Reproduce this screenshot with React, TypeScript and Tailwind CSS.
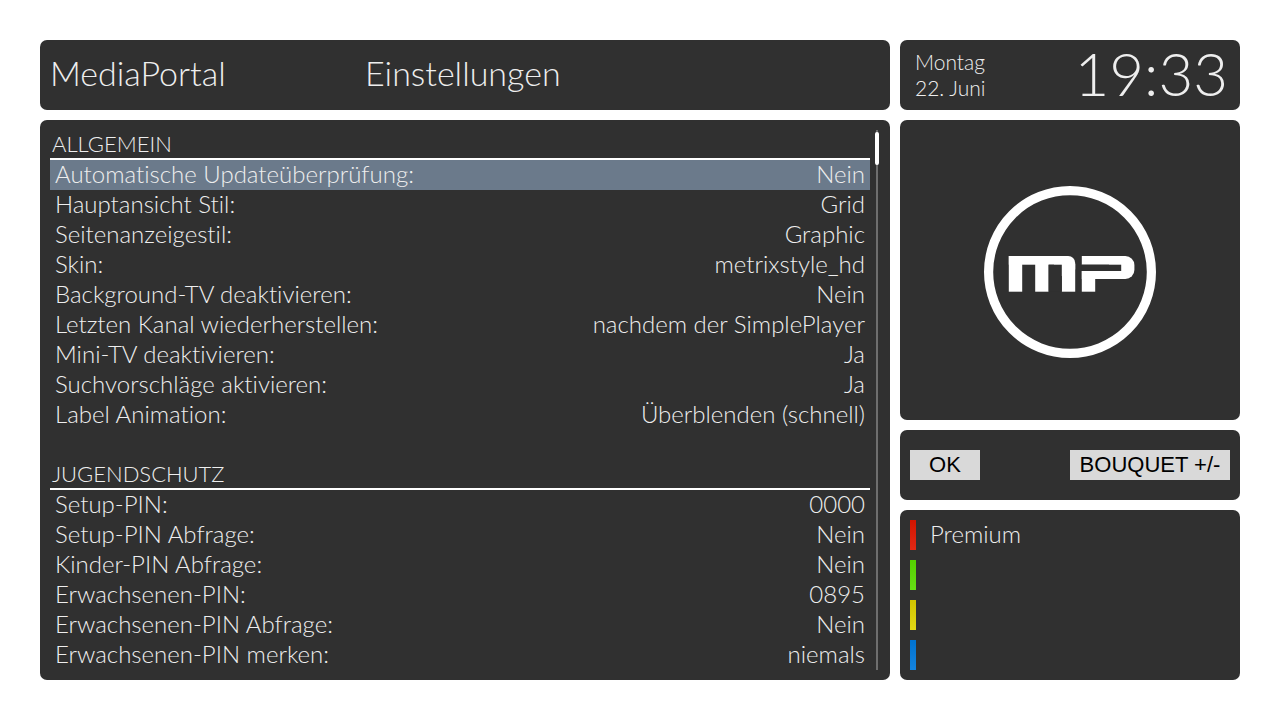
import clsx from "clsx";

interface Setting {
	label: string;
	value: string;
}

interface Section {
	title: string;
	settings: Setting[];
}

const sections: Section[] = [
	{
		title: "ALLGEMEIN",
		settings: [
			{ label: "Automatische Updateüberprüfung:", value: "Nein" },
			{ label: "Hauptansicht Stil:", value: "Grid" },
			{ label: "Seitenanzeigestil:", value: "Graphic" },
			{ label: "Skin:", value: "metrixstyle_hd" },
			{ label: "Background-TV deaktivieren:", value: "Nein" },
			{ label: "Letzten Kanal wiederherstellen:", value: "nachdem der SimplePlayer" },
			{ label: "Mini-TV deaktivieren:", value: "Ja" },
			{ label: "Suchvorschläge aktivieren:", value: "Ja" },
			{ label: "Label Animation:", value: "Überblenden (schnell)" },
		],
	},
	{
		title: "JUGENDSCHUTZ",
		settings: [
			{ label: "Setup-PIN:", value: "0000" },
			{ label: "Setup-PIN Abfrage:", value: "Nein" },
			{ label: "Kinder-PIN Abfrage:", value: "Nein" },
			{ label: "Erwachsenen-PIN:", value: "0895" },
			{ label: "Erwachsenen-PIN Abfrage:", value: "Nein" },
			{ label: "Erwachsenen-PIN merken:", value: "niemals" },
		],
	},
];

const colorKeys = [
	{ name: "red", label: "Premium", bar: "bg-linear-to-b from-[#d01400] to-[#e22814]" },
	{ name: "green", label: "", bar: "bg-linear-to-b from-[#55cf00] to-[#66df14]" },
	{ name: "yellow", label: "", bar: "bg-linear-to-b from-[#d0c400] to-[#e2d814]" },
	{ name: "blue", label: "", bar: "bg-linear-to-b from-[#0072cf] to-[#1484e0]" },
];

const selected = "Automatische Updateüberprüfung:";

function Logo() {
	return (
		<svg width="172" height="176" viewBox="0 0 172 176" role="img" aria-label="MediaPortal">
			<circle cx="86" cy="90" r="81.4" fill="none" stroke="#fff" strokeWidth="9.2" />
			<g fill="#fff">
				<rect x="24.8" y="74" width="58" height="8.7" />
				<rect x="24.8" y="74" width="13.4" height="35.7" />
				<rect x="51.2" y="78" width="13.4" height="31.7" />
				<rect x="70" y="74" width="21.2" height="20" rx="7" />
				<rect x="77.8" y="82" width="13.4" height="27.7" />
				<rect x="97.8" y="74" width="40" height="8.7" />
				<rect x="97.8" y="89" width="40" height="8" />
				<rect x="97.8" y="89" width="13.4" height="20.7" />
				<rect x="125" y="74" width="25.4" height="23" rx="9" />
			</g>
			<rect x="64.6" y="82.7" width="13.2" height="27" fill="#303030" />
			<rect x="97.8" y="82.7" width="39.4" height="6.3" fill="#303030" />
		</svg>
	);
}

function SettingsSection({ title, settings }: Section) {
	return (
		<section>
			<h2 className="h-[30px] border-b-2 border-white pl-0.5 text-[22px] leading-[28px]">{title}</h2>
			<dl>
				{settings.map((s) => (
					<div
						key={s.label}
						className={clsx("flex h-[30px] justify-between px-[5px] leading-[28px]", s.label === selected && "bg-[#6b7a8b]")}
					>
						<dt>{s.label}</dt>
						<dd>{s.value}</dd>
					</div>
				))}
			</dl>
		</section>
	);
}

export default function App() {
	return (
		<div className="min-h-screen bg-white p-10 font-['Lato',sans-serif] text-2xl font-light text-[#eeeeee] [font-variant-ligatures:none]">
			<div className="grid grid-cols-[1fr_340px] gap-[10px]">
				<header className="flex h-[70px] items-center rounded-[7px] bg-[#303030] px-[10px] pb-1 text-[34px]">
					<h1 className="w-[315px]">MediaPortal</h1>
					<p>Einstellungen</p>
				</header>

				<div className="flex items-center justify-between rounded-[7px] bg-[#303030] pl-[15px] pr-3">
					<div className="text-[21px] leading-[26px]">
						<p>Montag</p>
						<p>22. Juni</p>
					</div>
					<time className="h-[70px] text-[60px] leading-[66px]">19:33</time>
				</div>

				<main className="flex gap-[5px] rounded-[7px] bg-[#303030] py-[10px] pl-[10px] pr-[11px]">
					<div className="flex flex-1 flex-col gap-[30px]">
						{sections.map((section) => (
							<SettingsSection key={section.title} {...section} />
						))}
					</div>
					<div className="relative flex w-1 justify-center">
						<div className="w-0.5 bg-[#6e6e6e]" />
						<div className="absolute inset-x-0 top-0.5 h-[33px] rounded-full bg-white" />
					</div>
				</main>

				<aside className="flex flex-col gap-[10px]">
					<div className="flex flex-1 items-center justify-center rounded-[7px] bg-[#303030]">
						<Logo />
					</div>

					<div className="flex h-[70px] items-center justify-between rounded-[7px] bg-[#303030] px-[10px] font-['Liberation_Sans',sans-serif] text-[22px] font-normal text-black">
						<button className="h-[30px] w-[70px] bg-[#d9d9d9] leading-[28px]">OK</button>
						<button className="h-[30px] w-40 bg-[#d9d9d9] leading-[28px]">BOUQUET +/-</button>
					</div>

					<div className="flex flex-col gap-[10px] rounded-[7px] bg-[#303030] p-[10px]">
						{colorKeys.map((key) => (
							<button key={key.name} aria-label={key.label || key.name} className="flex h-[30px] gap-3.5 leading-[28px]">
								<span className={clsx("h-full w-1.5", key.bar)} />
								{key.label}
							</button>
						))}
					</div>
				</aside>
			</div>
		</div>
	);
}
